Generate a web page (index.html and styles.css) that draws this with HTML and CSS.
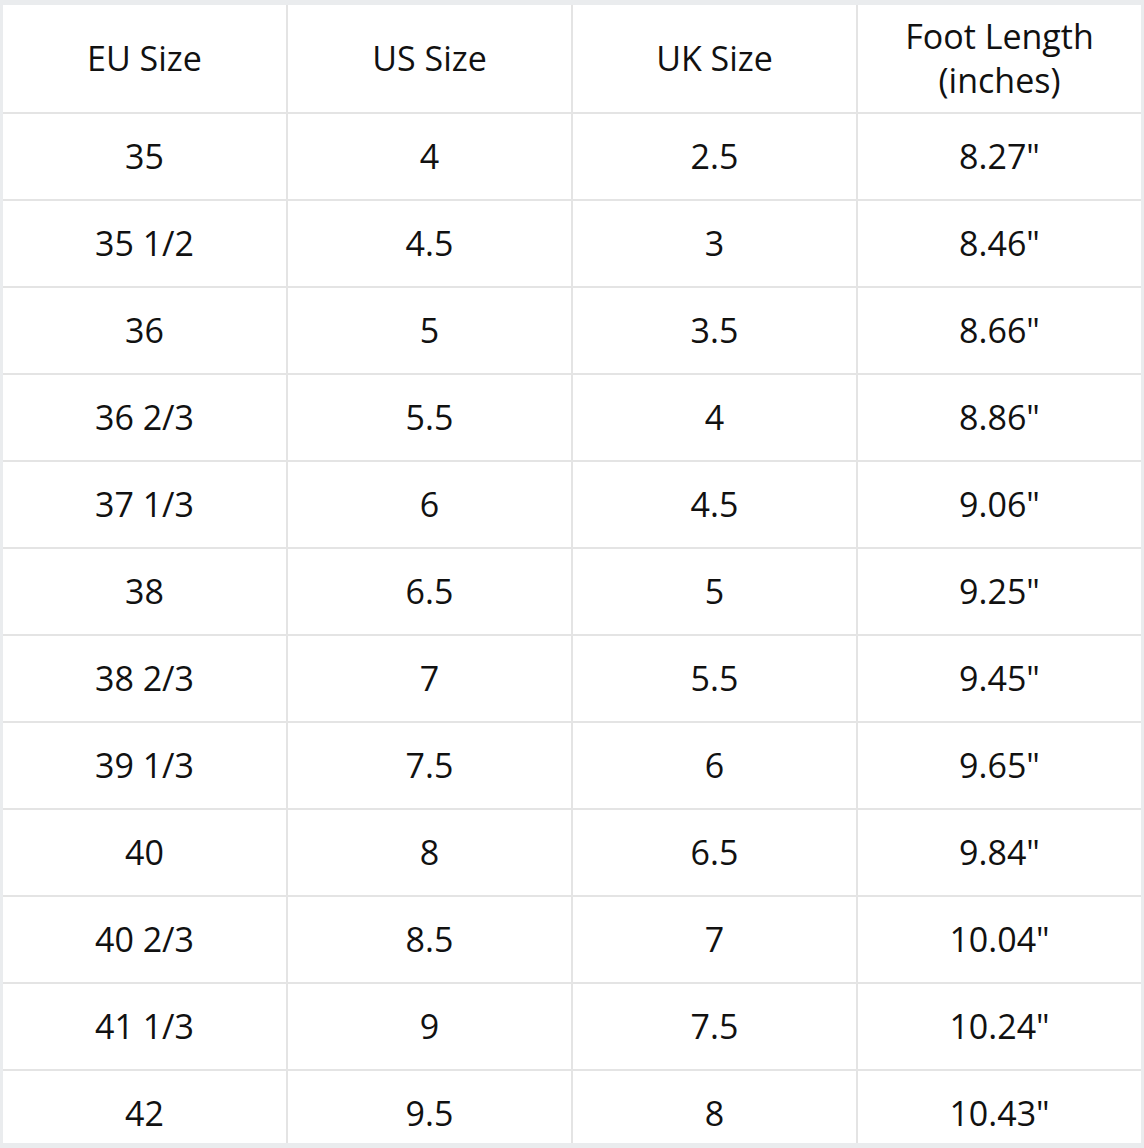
FILE: index.html
```html
<!DOCTYPE html>
<html>
<head>
<meta charset="utf-8">
<link rel="stylesheet" href="styles.css">
</head>
<body>
<div class="frame">
  <div class="table">
    <div class="cell head">EU Size</div>
    <div class="cell head">US Size</div>
    <div class="cell head">UK Size</div>
    <div class="cell head">Foot Length<br>(inches)</div>

    <div class="cell">35</div><div class="cell">4</div><div class="cell">2.5</div><div class="cell">8.27"</div>
    <div class="cell">35 1/2</div><div class="cell">4.5</div><div class="cell">3</div><div class="cell">8.46"</div>
    <div class="cell">36</div><div class="cell">5</div><div class="cell">3.5</div><div class="cell">8.66"</div>
    <div class="cell">36 2/3</div><div class="cell">5.5</div><div class="cell">4</div><div class="cell">8.86"</div>
    <div class="cell">37 1/3</div><div class="cell">6</div><div class="cell">4.5</div><div class="cell">9.06"</div>
    <div class="cell">38</div><div class="cell">6.5</div><div class="cell">5</div><div class="cell">9.25"</div>
    <div class="cell">38 2/3</div><div class="cell">7</div><div class="cell">5.5</div><div class="cell">9.45"</div>
    <div class="cell">39 1/3</div><div class="cell">7.5</div><div class="cell">6</div><div class="cell">9.65"</div>
    <div class="cell">40</div><div class="cell">8</div><div class="cell">6.5</div><div class="cell">9.84"</div>
    <div class="cell">40 2/3</div><div class="cell">8.5</div><div class="cell">7</div><div class="cell">10.04"</div>
    <div class="cell">41 1/3</div><div class="cell">9</div><div class="cell">7.5</div><div class="cell">10.24"</div>
    <div class="cell">42</div><div class="cell">9.5</div><div class="cell">8</div><div class="cell">10.43"</div>
  </div>
</div>
</body>
</html>
```
FILE: styles.css
```css
html, body {
  margin: 0;
  padding: 0;
  background: #eaecee;
  height: 1148px;
  overflow: hidden;
}

.frame {
  margin: 5px 3px 0 3px;
  width: 1138px;
  height: 1138px;
  overflow: hidden;
  background: #ffffff;
}

.table {
  display: grid;
  grid-template-columns: repeat(4, 283px);
  grid-template-rows: 107px;
  grid-auto-rows: 85px;
  gap: 2px;
  background: #e4e4e4;
  font-family: "Open Sans", "Liberation Sans", sans-serif;
  font-size: 34px;
  font-weight: 400;
  color: #111111;
}

.cell {
  background: #ffffff;
  display: flex;
  align-items: center;
  justify-content: center;
  text-align: center;
  line-height: 44px;
  padding-bottom: 2px;
}

.head {
  padding-bottom: 2px;
}
```
